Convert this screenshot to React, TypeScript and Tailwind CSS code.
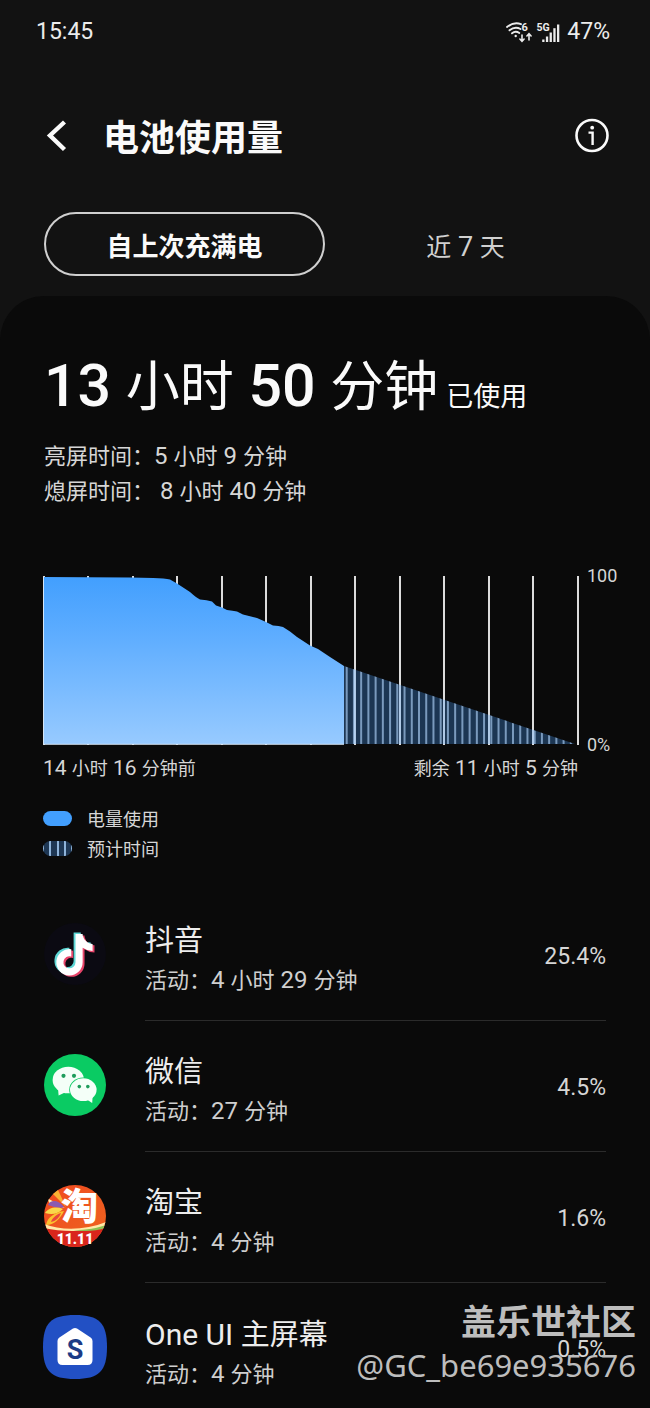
import type { ReactNode } from 'react';

type AppUsage = {
    name: string;
    active: string;
    percent: string;
    icon: ReactNode;
};

// Latin runs are set slightly larger than the Chinese characters around them
const Mixed = ({ text, latin }: { text: string; latin: string }) => (
    <>
        {text.split(/([A-Za-z0-9 ]+)/).map((part, i) =>
            i % 2 === 1 ? (
                <span key={i} className={`whitespace-pre ${latin}`}>
                    {part}
                </span>
            ) : (
                part
            ),
        )}
    </>
);

const NOTE_PATH =
    'M448,209.91a210.06,210.06,0,0,1-122.77-39.25V349.38A162.55,162.55,0,1,1,185,188.31V278.2a74.62,74.62,0,1,0,52.23,71.18V0l88,0a121.18,121.18,0,0,0,1.86,22.17h0A122.18,122.18,0,0,0,381,102.39a121.43,121.43,0,0,0,67,20.14Z';

const DouyinIcon = () => (
    <svg viewBox="0 0 62 62" className="h-full w-full" aria-hidden="true">
        <circle cx="31" cy="31" r="31" fill="#0b0a12" />
        <path d={NOTE_PATH} fill="#5ed8d6" transform="translate(10.4 9.6) scale(0.081)" />
        <path d={NOTE_PATH} fill="#e8446a" transform="translate(14.2 12.4) scale(0.081)" />
        <path d={NOTE_PATH} fill="#ffffff" transform="translate(12.3 11) scale(0.081)" />
    </svg>
);

const WechatIcon = () => (
    <svg viewBox="0 0 62 62" className="h-full w-full" aria-hidden="true">
        <circle cx="31" cy="31" r="31" fill="#0acb63" />
        <ellipse cx="24.3" cy="26" rx="15.7" ry="13.3" fill="#f4fff8" />
        <path d="M14 34 L14.6 41.5 L22 38 Z" fill="#f4fff8" />
        <ellipse cx="39.3" cy="35.7" rx="14.1" ry="12.3" fill="#0acb63" />
        <ellipse cx="39.3" cy="35.7" rx="13.3" ry="11.4" fill="#f4fff8" />
        <path d="M42 45 L48.2 49 L48.6 42 Z" fill="#f4fff8" />
        <circle cx="19.5" cy="21.8" r="2.1" fill="#1f9d5c" />
        <circle cx="30" cy="21.8" r="2.1" fill="#1f9d5c" />
        <circle cx="35.3" cy="32.6" r="1.8" fill="#1f9d5c" />
        <circle cx="43.8" cy="32.6" r="1.8" fill="#1f9d5c" />
    </svg>
);

const TaobaoIcon = () => (
    <svg viewBox="0 0 62 62" className="h-full w-full" aria-hidden="true">
        <defs>
            <clipPath id="taobao-round">
                <circle cx="31" cy="31" r="31" />
            </clipPath>
            <linearGradient id="taobao-bg" x1="0" y1="0" x2="1" y2="1">
                <stop offset="0" stopColor="#f0471f" />
                <stop offset="0.6" stopColor="#ee5a20" />
                <stop offset="1" stopColor="#f0641c" />
            </linearGradient>
        </defs>
        <g clipPath="url(#taobao-round)">
            <rect width="62" height="62" fill="url(#taobao-bg)" />
            <path d="M22 22 L7 7 L14 5 Z" fill="#f9b233" />
            <path d="M21 23 L3 13 L6 19 Z" fill="#fff0b0" />
            <path d="M20 22 C14 14 6 15 4 20 C10 22 15 24 20 22 Z" fill="#8a5bb0" />
            <path d="M19 24 C12 21 4 23 1 28 C8 30 14 29 19 24 Z" fill="#f9d84a" />
            <path d="M20 26 C12 27 3 32 2 40 C10 40 16 34 20 26 Z" fill="#fbc02d" />
            <path d="M17 28 C13 29 8 33 7 37 C12 36 15 33 17 28 Z" fill="#e8453c" />
            <path d="M0 40 C18 47 42 46 62 38 L62 62 L0 62 Z" fill="#d9261c" />
            <path d="M0 39 C18 46 42 45 62 37 L62 42 C42 47 18 47 0 43 Z" fill="#ffe9a8" />
            <path d="M30 45 C42 45 54 43 62 40 L62 43 C52 46 40 47 30 45 Z" fill="#8cc152" />
        </g>
        <text x="35.5" y="35" textAnchor="middle" fontSize="37" fontWeight="900" fill="#ffffff">
            淘
        </text>
        <text x="31" y="59" textAnchor="middle" fontSize="14" fontWeight="900" fill="#ffffff">
            11.11
        </text>
    </svg>
);

const OneUiIcon = () => (
    <svg viewBox="0 0 64 64" className="h-full w-full" aria-hidden="true">
        <path d="M32 0 C56 0 64 8 64 32 C64 56 56 64 32 64 C8 64 0 56 0 32 C0 8 8 0 32 0 Z" fill="#2250c4" />
        <path
            d="M30 13.6 Q32 12.2 34 13.6 L47.6 22.4 Q49.5 23.6 49.5 26 V45 Q49.5 50 44.5 50 H19.5 Q14.5 50 14.5 45 V26 Q14.5 23.6 16.4 22.4 Z"
            fill="#ffffff"
        />
        <text x="32" y="43.5" textAnchor="middle" fontSize="27" fontWeight="700" fill="#1c3b86">
            S
        </text>
    </svg>
);

const apps: AppUsage[] = [
    { name: '抖音', active: '活动：4 小时 29 分钟', percent: '25.4%', icon: <DouyinIcon /> },
    { name: '微信', active: '活动：27 分钟', percent: '4.5%', icon: <WechatIcon /> },
    { name: '淘宝', active: '活动：4 分钟', percent: '1.6%', icon: <TaobaoIcon /> },
    { name: 'One UI 主屏幕', active: '活动：4 分钟', percent: '0.5%', icon: <OneUiIcon /> },
];

const StatusBar = () => (
    <div className="flex h-16 items-center justify-between pr-10 pl-9 text-[23px] text-[#ececec]">
        <span>15:45</span>
        <div className="flex items-center gap-1.5">
            <svg width="55" height="24" viewBox="507 19 55 24" fill="none" stroke="#ececec" strokeLinecap="round" aria-hidden="true">
                <path d="M508 26 Q515 20.5 522 23.2" strokeWidth="1.9" />
                <path d="M510.5 29.3 Q516 25 521.5 28" strokeWidth="1.9" />
                <path d="M513 32.3 Q516.5 29.5 520.3 32" strokeWidth="1.9" />
                <circle cx="516.7" cy="35" r="1.2" fill="#ececec" stroke="none" />
                <path d="M523 34 V40 M520.9 38 L523 40.3 L525.1 38" strokeWidth="1.6" />
                <path d="M530 39 V33 M527.9 35 L530 32.7 L532.1 35" strokeWidth="1.6" />
                <g fill="#ececec" stroke="none" fontWeight="700">
                    <text x="522.5" y="30" fontSize="11">
                        6
                    </text>
                    <text x="537.5" y="29.5" fontSize="10.5">
                        5G
                    </text>
                    <rect x="543.2" y="38.5" width="2.3" height="2.5" />
                    <rect x="546.9" y="35.5" width="2.3" height="5.5" />
                    <rect x="550.6" y="31.5" width="2.3" height="9.5" />
                    <rect x="554.3" y="27.2" width="2.3" height="13.8" />
                    <rect x="558" y="23.5" width="2.3" height="17.5" />
                </g>
            </svg>
            <span>47%</span>
        </div>
    </div>
);

const Header = () => (
    <header className="flex h-36 items-center pr-10 pl-11 text-[#fafafa]">
        <button type="button" aria-label="返回">
            <svg width="26" height="36" viewBox="0 0 26 36" fill="none" stroke="currentColor" strokeWidth="4.4" aria-hidden="true">
                <path d="M20.5 4 L6 17.5 L20.5 31.5" />
            </svg>
        </button>
        <h1 className="ml-[33px] flex-1 pt-1.5 text-[36px] leading-[44px] font-bold">电池使用量</h1>
        <button type="button" aria-label="信息">
            <svg width="36" height="36" viewBox="0 0 36 36" fill="none" stroke="currentColor" aria-hidden="true">
                <circle cx="18" cy="17.5" r="15.5" strokeWidth="2.6" />
                <path d="M14.5 14.6 H18.6 V27" strokeWidth="2.4" />
                <circle cx="18.2" cy="9.7" r="1.9" fill="currentColor" stroke="none" />
            </svg>
        </button>
    </header>
);

const gridLines = [1, 45, 90, 134, 179, 223, 268, 312, 357, 401, 446, 490, 535];
const stripes = Array.from({ length: 32 }, (_, i) => 303.7 + i * 7.23);

const BatteryChart = () => (
    <svg viewBox="0 0 536 169" preserveAspectRatio="none" className="h-[169px] min-w-0 flex-1" role="img" aria-label="电量使用">
        <defs>
            <linearGradient id="used" x1="0" y1="0" x2="0" y2="1">
                <stop offset="0" stopColor="#429ffe" />
                <stop offset="0.35" stopColor="#5eadff" />
                <stop offset="1" stopColor="#97caff" />
            </linearGradient>
            <clipPath id="estimate">
                <path d="M301 90 L532 168 L301 168 Z" />
            </clipPath>
        </defs>
        {gridLines.map((x) => (
            <line key={x} x1={x} x2={x} y1="0" y2="169" stroke="#dcdcdc" strokeWidth="2" />
        ))}
        <g clipPath="url(#estimate)">
            <rect x="301" y="80" width="235" height="89" fill="#4a9eff" fillOpacity="0.3" />
            {stripes.map((x) => (
                <line key={x} x1={x} x2={x} y1="80" y2="169" stroke="#b4d8ff" strokeOpacity="0.62" strokeWidth="2" />
            ))}
        </g>
        <path
            d="M0 1 L87 1.5 L110 2 Q122 2.3 127 3.5 L134 7.5 L147 16 Q153 21.5 157 23.5 Q164 23.8 169 25.5 L173 29.5 L179 31.5 L184 34 Q190 34.5 194 35.5 L200 38.5 L214 42 L223 46 L230 49.5 Q236 49.8 240 51 L247 55.5 L254 61 L267 69.5 L275 73 L287 81 L301 90 V168 H0 Z"
            fill="url(#used)"
        />
        <path d="M0.5 1 V168.3 H301" fill="none" stroke="#d5e5f5" strokeWidth="1" />
    </svg>
);

const AppRow = ({ app }: { app: AppUsage }) => (
    <li className="group flex h-[131px] last:h-[125px]">
        <div className="mt-8 h-16 w-16 shrink-0 p-px group-last:p-0">{app.icon}</div>
        <div className="ml-[38px] flex flex-1 items-start justify-between border-b border-[#2b2b2b] group-last:border-b-0">
            <div className="pt-8">
                <h2 className="text-[29px] leading-[39px] text-[#ededed]">
                    <Mixed text={app.name} latin="text-[30px]" />
                </h2>
                <p className="text-[22px] leading-[39px] text-[#cfcfcf]">
                    <Mixed text={app.active} latin="text-[24px]" />
                </p>
            </div>
            <span className="pt-[50px] text-[23px] text-[#d6d6d6]">{app.percent}</span>
        </div>
    </li>
);

const App = () => {
    return (
        <div
            lang="zh-CN"
            className="relative flex min-h-screen flex-col overflow-hidden bg-[#121212] font-['Roboto','Noto_Sans_CJK_SC',sans-serif]"
        >
            <StatusBar />
            <Header />

            <div className="mx-11 mt-1 grid h-16 grid-cols-2">
                <button type="button" className="rounded-full border-2 border-[#cfcfcf] pt-1.5 text-[26px] font-bold text-[#fafafa]">
                    自上次充满电
                </button>
                <button type="button" className="pt-1.5 text-[25px] text-[#d0d0d0]">
                    <Mixed text="近 7 天" latin="text-[27px]" />
                </button>
            </div>

            <main className="mt-5 flex-1 rounded-t-[44px] bg-[#0a0a0a]">
                <section className="px-11 pt-[54px]">
                    <div className="flex items-baseline gap-2 text-[#fafafa]">
                        <p className="text-[54px] leading-[72px]">
                            <Mixed text="13 小时 50 分钟" latin="text-[59px] font-medium" />
                        </p>
                        <span className="text-[27px]">已使用</span>
                    </div>
                    <div className="mt-[15px] text-[22px] leading-[35px] text-[#d6d6d6]">
                        <p>
                            <Mixed text="亮屏时间：5 小时 9 分钟" latin="text-[24px]" />
                        </p>
                        <p>
                            <Mixed text="熄屏时间： 8 小时 40 分钟" latin="text-[24px]" />
                        </p>
                    </div>
                </section>

                <section className="mt-[67px] pr-8 pl-[43px] text-[18px] text-[#d6d6d6]">
                    <div className="flex gap-2">
                        <BatteryChart />
                        <div className="-my-3 flex w-[31px] flex-col justify-between leading-6">
                            <span>100</span>
                            <span>0%</span>
                        </div>
                    </div>
                    <div className="mt-[11px] mr-10 flex justify-between leading-6">
                        <span>
                            <Mixed text="14 小时 16 分钟前" latin="text-[21px]" />
                        </span>
                        <span>
                            <Mixed text="剩余 11 小时 5 分钟" latin="text-[21px]" />
                        </span>
                    </div>
                    <ul className="mt-6 leading-[30px]">
                        <li className="flex items-center gap-[15px]">
                            <span className="mb-1 h-[15px] w-[29px] rounded-full bg-[#429ffe]" />
                            电量使用
                        </li>
                        <li className="flex items-center gap-[15px]">
                            <span className="mb-1 flex h-[15px] w-[29px] justify-between overflow-hidden rounded-full bg-[#1e3754]">
                                <span className="w-px bg-[#8fb4da]" />
                                <span className="w-0.5 bg-[#8fb4da]" />
                                <span className="w-0.5 bg-[#8fb4da]" />
                                <span className="w-0.5 bg-[#8fb4da]" />
                                <span className="w-px bg-[#8fb4da]" />
                            </span>
                            预计时间
                        </li>
                    </ul>
                </section>

                <ul className="mt-[25px] pr-11 pl-[43px]">
                    {apps.map((app) => (
                        <AppRow key={app.name} app={app} />
                    ))}
                </ul>
            </main>

            <div className="pointer-events-none absolute right-3.5 bottom-6 text-right text-[#bdbdbd]">
                <p className="text-[35px] leading-[44px] font-bold">盖乐世社区</p>
                <p className="font-['Noto_Sans',sans-serif] text-[31px] leading-[38px]">@GC_be69e935676</p>
            </div>
        </div>
    );
};

export default App;
